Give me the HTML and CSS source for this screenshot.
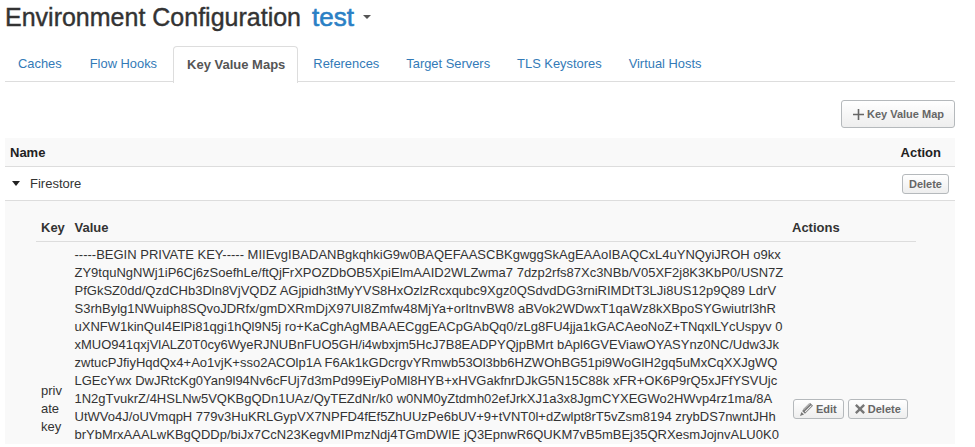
FILE: index.html
```html
<!DOCTYPE html>
<html lang="en">
<head>
<meta charset="utf-8">
<title>Environment Configuration</title>
<link rel="stylesheet" href="styles.css">
</head>
<body>
<div class="page">
  <header class="title-row">
    <h1 class="title">Environment Configuration</h1>
    <a class="env">test</a>
    <span class="env-caret"></span>
  </header>
  <nav class="tabs">
    <a class="tab">Caches</a>
    <a class="tab">Flow Hooks</a>
    <a class="tab tab-active">Key Value Maps</a>
    <a class="tab">References</a>
    <a class="tab">Target Servers</a>
    <a class="tab">TLS Keystores</a>
    <a class="tab">Virtual Hosts</a>
  </nav>
  <div class="toolbar">
    <button class="btn btn-add"><svg class="ico-plus" viewBox="0 0 11 11" width="11" height="11"><path d="M4.700 0h1.600v4.700H11v1.600H6.300V11H4.700V6.300H0V4.700h4.700z"/></svg>Key Value Map</button>
  </div>
  <div class="outer-head">
    <span>Name</span>
    <span>Action</span>
  </div>
  <div class="outer-row">
    <div class="row-name"><span class="row-caret"></span>Firestore</div>
    <button class="btn btn-small">Delete</button>
  </div>
  <section class="detail">
    <div class="inner-head">
      <span class="col-key">Key</span>
      <span class="col-value">Value</span>
      <span class="col-actions">Actions</span>
    </div>
    <div class="inner-row">
      <div class="col-key key-cell">private key</div>
      <div class="col-value value-cell">-----BEGIN PRIVATE KEY----- MIIEvgIBADANBgkqhkiG9w0BAQEFAASCBKgwggSkAgEAAoIBAQCxL4uYNQyiJROH o9kx<br>ZY9tquNgNWj1iP6Cj6zSoefhLe/ftQjFrXPOZDbOB5XpiElmAAID2WLZwma7 7dzp2rfs87Xc3NBb/V05XF2j8K3KbP0/USN7Z<br>PfGkSZ0dd/QzdCHb3Dln8VjVQDZ AGjpidh3tMyYVS8HxOzlzRcxqubc9Xgz0QSdvdDG3rniRIMDtT3LJi8US12p9Q89 LdrV<br>S3rhBylg1NWuiph8SQvoJDRfx/gmDXRmDjX97UI8Zmfw48MjYa+orItnvBW8 aBVok2WDwxT1qaWz8kXBpoSYGwiutrl3hR<br>uXNFW1kinQuI4ElPi81qgi1hQl9N5j ro+KaCghAgMBAAECggEACpGAbQq0/zLg8FU4jja1kGACAeoNoZ+TNqxlLYcUspyv 0<br>xMUO941qxjVlALZ0T0cy6WyeRJNUBnFUO5GH/i4wbxjm5HcJ7B8EADPYQjpBMrt bApl6GVEViawOYASYnz0NC/Udw3Jk<br>zwtucPJfiyHqdQx4+Ao1vjK+sso2ACOlp1A F6Ak1kGDcrgvYRmwb53Ol3bb6HZWOhBG51pi9WoGlH2gq5uMxCqXXJgWQ<br>LGEcYwx DwJRtcKg0Yan9l94Nv6cFUj7d3mPd99EiyPoMl8HYB+xHVGakfnrDJkG5N15C88k xFR+OK6P9rQ5xJFfYSVUjc<br>1N2gTvukrZ/4HSLNw5VQKBgQDn1UAz/QyTEZdNr/k0 w0NM0yZtdmh02efJrkXJ1a3x8JgmCYXEGWo2HWvp4rz1ma/8A<br>UtWVo4J/oUVmqpH 779v3HuKRLGypVX7NPFD4fEf5ZhUUzPe6bUV+9+tVNT0l+dZwlpt8rT5vZsm8194 zrybDS7nwntJHh<br>brYbMrxAAALwKBgQDDp/biJx7CcN23KegvMIPmzNdj4TGmDWIE jQ3EpnwR6QUKM7vB5mBEj35QRXesmJojnvALU0K0</div>
      <div class="col-actions actions-cell">
        <button class="btn btn-small"><svg class="ico ico-edit" viewBox="1 1 11 11" width="13" height="13"><path d="M9.600 1 12 3.400 5.200 10.200 2.800 7.800zM2.200 8.600l2.200 2.200-3.400 1.200zM3.400 6.600l.6.6 5.400-5.400-.6-.6zM5 8.200l.6.6 5.400-5.400-.6-.6z"/></svg>Edit</button>
        <button class="btn btn-small"><svg class="ico" viewBox="0 0 10 10" width="10" height="10"><path d="M1.700 0 5 3.300 8.300 0 10 1.700 6.700 5 10 8.300 8.300 10 5 6.700 1.700 10 0 8.300 3.300 5 0 1.700z"/></svg>Delete</button>
      </div>
    </div>
  </section>
</div>
</body>
</html>
```

FILE: styles.css
```css
html, body {
  margin: 0;
  height: 100%;
  overflow: hidden;
  background: #fff;
}
.page {
  width: 950px;
  margin-left: 5px;
  font-family: "Liberation Sans", Arial, sans-serif;
  font-size: 13px;
  line-height: 18px;
  color: #333;
}
.title-row {
  display: flex;
  align-items: center;
  height: 40px;
  margin-top: -3px;
}
.title {
  margin: 0;
  font-size: 25px;
  font-weight: 400;
  line-height: 40px;
  color: #333;
  -webkit-text-stroke: 0.4px #333;
}
.env {
  margin-left: 11px;
  font-size: 26px;
  color: #2a80c5;
  -webkit-text-stroke: 0.6px #2a80c5;
}
.env-caret {
  width: 0;
  height: 0;
  margin-left: 9px;
  border-left: 4px solid transparent;
  border-right: 4px solid transparent;
  border-top: 4px solid #555;
}
.tabs {
  display: flex;
  margin-top: 9px;
  height: 35px;
  border-bottom: 1px solid #ddd;
}
.tab {
  margin-right: 2px;
  padding: 9px 13px 8px;
  height: 18px;
  font-size: 12.900px;
  color: #337ab7;
}
.tab-active {
  height: 19px;
  margin-left: 1px;
  margin-right: 2.500px;
  padding: 9px 12px 8px 13px;
  background: #fff;
  border: 1px solid #ddd;
  border-bottom: 0;
  border-radius: 4px 4px 0 0;
  font-size: 13px;
  font-weight: 700;
  color: #555;
}
.tab-active ~ .tab {
  padding-left: 12.500px;
  padding-right: 12.500px;
}
.btn {
  display: inline-flex;
  align-items: center;
  font-family: inherit;
  font-weight: 700;
  color: #666;
  background: linear-gradient(#fff, #eee);
  border: 1px solid #b5b9bc;
  border-radius: 3px;
}
.toolbar {
  display: flex;
  justify-content: flex-end;
  margin-top: 18px;
}
.btn-add {
  height: 28px;
  padding: 0 10px 0 11px;
  font-size: 11px;
}
.ico-plus {
  margin-right: 3px;
  fill: #666;
}
.outer-head {
  display: flex;
  justify-content: space-between;
  box-sizing: content-box;
  height: 27px;
  margin-top: 10px;
  padding: 1px 14px 0 5px;
  align-items: center;
  font-weight: 700;
  color: #222;
  background: #f9f9f9;
  border-bottom: 1px solid #ddd;
}
.outer-row {
  display: flex;
  justify-content: space-between;
  align-items: center;
  height: 33px;
  padding: 0 6px 0 7px;
  border-bottom: 1px solid #ddd;
}
.row-name {
  display: flex;
  align-items: center;
}
.row-caret {
  width: 0;
  height: 0;
  margin-right: 10px;
  border-left: 4px solid transparent;
  border-right: 4px solid transparent;
  border-top: 5px solid #222;
}
.btn-small {
  height: 20px;
  padding: 0 6px;
  font-size: 11px;
}
.detail {
  padding: 5px 39px 0 31px;
  background: #f9f9f9;
}
.inner-head,
.inner-row {
  display: flex;
}
.inner-head {
  height: 31px;
  padding-top: 4px;
  align-items: flex-start;
  font-weight: 700;
  border-bottom: 1px solid #ddd;
}
.inner-head span {
  padding-top: 9px;
}
.col-key {
  flex: 0 0 38.500px;
  box-sizing: border-box;
  padding-left: 5px;
}
.col-value {
  flex: 0 0 717.500px;
}
.col-actions {
  flex: 1;
}
.inner-row {
  padding-top: 4px;
  align-items: flex-start;
}
.key-cell {
  word-break: break-all;
  padding-right: 7px;
  padding-top: 136px;
}
.value-cell {
  white-space: nowrap;
}
.actions-cell {
  display: flex;
  gap: 4px;
  margin-top: 153px;
  padding-left: 1px;
}
.ico {
  margin-right: 3px;
  fill: #777;
}
```
